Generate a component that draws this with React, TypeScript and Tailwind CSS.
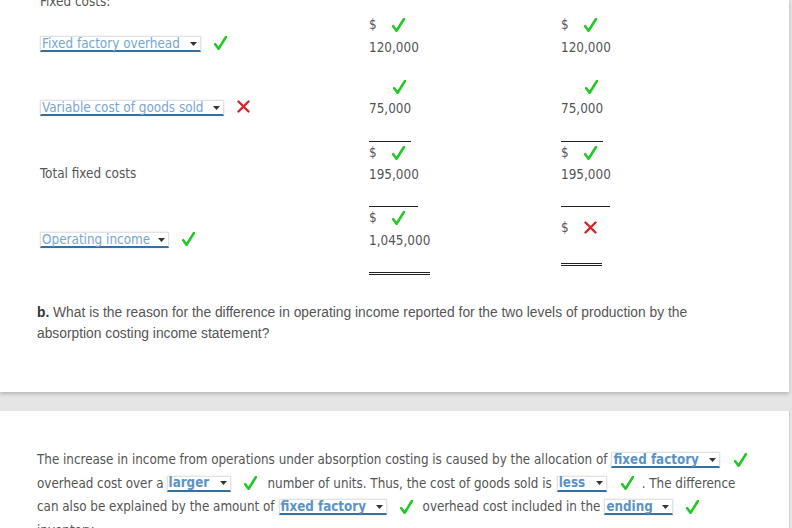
import React from "react";

const body = { fontFamily: '"DejaVu Sans Condensed", "DejaVu Sans", Verdana, sans-serif' };
const arial = { fontFamily: '"Liberation Sans", Arial, sans-serif' };

function Check() {
  return (
    <svg width="13" height="14" viewBox="0 0 13 14" className="inline-block shrink-0">
      <path d="M1.2 8.2 L4.6 12.8 L12 1" fill="none" stroke="#22c824" strokeWidth="2.6" strokeLinecap="round" strokeLinejoin="round" />
    </svg>
  );
}

function Cross() {
  return (
    <svg width="13" height="13" viewBox="0 0 13 13" className="inline-block shrink-0">
      <path d="M1.5 1.5 L11.5 11.5 M11.5 1.5 L1.5 11.5" fill="none" stroke="#d9232a" strokeWidth="2.4" strokeLinecap="round" />
    </svg>
  );
}

function Select({ label, width, bold }: { label: string; width: string; bold?: boolean }) {
  return (
    <span
      className={`inline-flex h-[16px] items-center justify-between border border-[#e2e2e2] border-b-2 border-b-[#35709e] bg-white pl-[1px] pr-[3px] align-middle leading-none shadow-[0_0_2px_rgba(0,0,0,0.12)] ${width} ${
        bold ? "font-bold text-[#5a93c4]" : "text-[#78a6cf]"
      }`}
    >
      <span className="whitespace-nowrap">{label}</span>
      <svg width="7" height="4" viewBox="0 0 7 4" className="shrink-0">
        <path d="M0 0 H7 L3.5 4 Z" fill="#333" />
      </svg>
    </span>
  );
}

function Dollar({ mark }: { mark?: "check" | "cross" }) {
  return (
    <div className="flex items-center gap-[15px]">
      <span>$</span>
      {mark === "cross" ? <Cross /> : <Check />}
    </div>
  );
}

export default function App() {
  return (
    <div className="h-[528px] w-[792px] overflow-hidden bg-[#e5e5e5] text-[13.4px] text-[#555]" style={body}>
      {/* Statement card */}
      <div className="relative z-10 flex h-[392px] w-[789px] flex-col bg-white shadow-[0_2px_4px_rgba(0,0,0,0.22)]">
        <div className="flex h-[15px] items-start pl-10">
          <div className="-mt-[6px] leading-[16px]">Fixed costs:</div>
        </div>

        {/* Fixed factory overhead */}
        <div className="flex h-[44px] pl-10">
          <div className="flex w-[329px] items-start gap-[13px] pt-[21px]">
            <Select label="Fixed factory overhead" width="w-[161px]" />
            <Check />
          </div>
          <div className="w-[192px]">
            <div className="flex h-[20px] items-center"><Dollar /></div>
            <div className="mt-[3px] h-[20px] leading-[20px]">120,000</div>
          </div>
          <div>
            <div className="flex h-[20px] items-center"><Dollar /></div>
            <div className="mt-[3px] h-[20px] leading-[20px]">120,000</div>
          </div>
        </div>

        {/* Variable cost of goods sold */}
        <div className="flex h-[62px] pl-10">
          <div className="flex w-[329px] items-start gap-[13px] pt-[41px]">
            <Select label="Variable cost of goods sold" width="w-[184px]" />
            <Cross />
          </div>
          <div className="w-[192px] pt-[18px]">
            <div className="flex h-[20px] items-center pl-[24px]"><Check /></div>
            <div className="mt-[2px] h-[20px] leading-[20px]">75,000</div>
          </div>
          <div className="pt-[18px]">
            <div className="flex h-[20px] items-center pl-[24px]"><Check /></div>
            <div className="mt-[2px] h-[20px] leading-[20px]">75,000</div>
          </div>
        </div>

        {/* Total fixed costs */}
        <div className="flex h-[65px] pl-10">
          <div className="w-[329px] pt-[45px] leading-[16px]">Total fixed costs</div>
          <div className="w-[192px] pt-[20px]">
            <div className="w-[42px] border-t border-[#222]" />
            <div className="flex h-[22px] items-center"><Dollar /></div>
            <div className="h-[22px] leading-[22px]">195,000</div>
          </div>
          <div className="pt-[20px]">
            <div className="w-[42px] border-t border-[#222]" />
            <div className="flex h-[22px] items-center"><Dollar /></div>
            <div className="h-[22px] leading-[22px]">195,000</div>
          </div>
        </div>

        {/* Operating income */}
        <div className="flex h-[91px] pl-10">
          <div className="flex w-[329px] items-start gap-[13px] pt-[46px]">
            <Select label="Operating income" width="w-[129px]" />
            <Check />
          </div>
          <div className="w-[192px] pt-[20px]">
            <div className="w-[49px] border-t border-[#222]" />
            <div className="flex h-[22px] items-center"><Dollar /></div>
            <div className="mt-[1px] h-[22px] leading-[22px]">1,045,000</div>
            <div className="mt-[20px] h-[3px] w-[61px] border-y border-[#222]" />
          </div>
          <div className="pt-[20px]">
            <div className="w-[49px] border-t border-[#222]" />
            <div className="flex h-[42px] items-center"><Dollar mark="cross" /></div>
            <div className="mt-[14px] h-[3px] w-[41px] border-y border-[#222]" />
          </div>
        </div>

        <div className="pl-[37px] pt-[25px] text-[13.8px] leading-[21px] text-[#555]" style={arial}>
          <span className="font-bold text-[#333]">b.</span> What is the reason for the difference in operating income reported for the two levels of production by the
          <br />
          absorption costing income statement?
        </div>
      </div>

      <div className="h-[19px]" />

      {/* Answer card */}
      <div className="h-[120px] w-[790px] border-r border-[#cfcfcf] bg-white pl-[37px] pt-[37px] leading-[23.5px] text-[13.3px]">
        <div className="flex items-center whitespace-nowrap">
          <span>The increase in income from operations under absorption costing is caused by the allocation of</span>
          <span className="ml-[4px]"><Select label="fixed factory" width="w-[109px]" bold /></span>
          <span className="ml-[14px] flex"><Check /></span>
        </div>
        <div className="flex items-center whitespace-nowrap">
          <span>overhead cost over a</span>
          <span className="ml-[3px]"><Select label="larger" width="w-[64px]" bold /></span>
          <span className="ml-[13px] flex"><Check /></span>
          <span className="ml-[11px]">number of units. Thus, the cost of goods sold is</span>
          <span className="ml-[5px]"><Select label="less" width="w-[50px]" bold /></span>
          <span className="ml-[14px] flex"><Check /></span>
          <span className="ml-[8px]">. The difference</span>
        </div>
        <div className="flex items-center whitespace-nowrap">
          <span>can also be explained by the amount of</span>
          <span className="ml-[4px]"><Select label="fixed factory" width="w-[108px]" bold /></span>
          <span className="ml-[13px] flex"><Check /></span>
          <span className="ml-[10px]">overhead cost included in the</span>
          <span className="ml-[4px]"><Select label="ending" width="w-[69px]" bold /></span>
          <span className="ml-[13px] flex"><Check /></span>
        </div>
        <div>inventory.</div>
      </div>
    </div>
  );
}
